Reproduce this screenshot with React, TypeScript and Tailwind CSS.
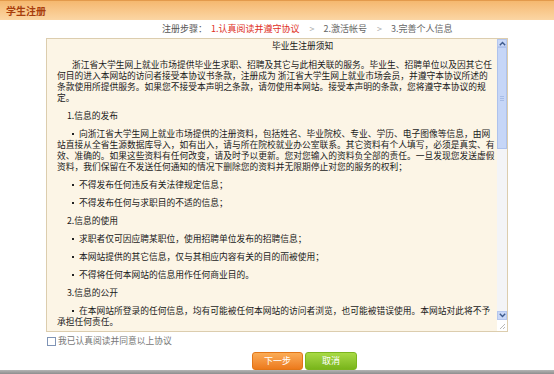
import React from "react";

type Block =
  | { kind: "head"; text: string }
  | { kind: "para"; lines: string[] }
  | { kind: "bullet"; lines: string[] };

const blocks: Block[] = [
  {
    kind: "para",
    lines: [
      "浙江省大学生网上就业市场提供毕业生求职、招聘及其它与此相关联的服务。毕业生、招聘单位以及因其它任",
      "何目的进入本网站的访问者接受本协议书条款，注册成为 浙江省大学生网上就业市场会员，并遵守本协议所述的",
      "条款使用所提供服务。如果您不接受本声明之条款，请勿使用本网站。接受本声明的条款，您将遵守本协议的规",
      "定。",
    ],
  },
  { kind: "head", text: "1.信息的发布" },
  {
    kind: "bullet",
    lines: [
      "向浙江省大学生网上就业市场提供的注册资料，包括姓名、毕业院校、专业、学历、电子图像等信息，由网",
      "站直接从全省生源数据库导入，如有出入，请与所在院校就业办公室联系。其它资料有个人填写，必须是真实、有",
      "效、准确的。如果这些资料有任何改变，请及时予以更新。您对您输入的资料负全部的责任。一旦发现您发送虚假",
      "资料，我们保留在不发送任何通知的情况下删除您的资料并无限期停止对您的服务的权利；",
    ],
  },
  { kind: "bullet", lines: ["不得发布任何违反有关法律规定信息；"] },
  { kind: "bullet", lines: ["不得发布任何与求职目的不适的信息；"] },
  { kind: "head", text: "2.信息的使用" },
  { kind: "bullet", lines: ["求职者仅可因应聘某职位，使用招聘单位发布的招聘信息；"] },
  { kind: "bullet", lines: ["本网站提供的其它信息，仅与其相应内容有关的目的而被使用；"] },
  { kind: "bullet", lines: ["不得将任何本网站的信息用作任何商业目的。"] },
  { kind: "head", text: "3.信息的公开" },
  {
    kind: "bullet",
    lines: [
      "在本网站所登录的任何信息，均有可能被任何本网站的访问者浏览，也可能被错误使用。本网站对此将不予",
      "承担任何责任。",
    ],
  },
];

function Dot() {
  return <span className="inline-block w-[2px] h-[2px] bg-[#222] align-middle mr-[5px] mb-[1px]" />;
}

function AgreementBlock({ block }: { block: Block }) {
  if (block.kind === "head") {
    return <div className="mb-[7px] pl-[10px]">{block.text}</div>;
  }
  return (
    <div className="mb-[7px]">
      {block.lines.map((line, i) => (
        <div key={i} className={i === 0 ? "pl-[15px]" : ""}>
          {i === 0 && block.kind === "bullet" && <Dot />}
          {line}
        </div>
      ))}
    </div>
  );
}

function Chevron({ up }: { up?: boolean }) {
  return (
    <svg width="7" height="5" viewBox="0 0 7 5" className={up ? "" : "rotate-180"}>
      <path d="M0.8 4.2 L3.5 1.4 L6.2 4.2" fill="none" stroke="#3d5a8c" strokeWidth="1.4" />
    </svg>
  );
}

function FakeScrollbar() {
  return (
    <div className="flex w-[10px] flex-col">
      <div className="flex h-[8px] items-center justify-center border border-[#b4c6ee] bg-[#c9d8f8]">
        <Chevron up />
      </div>
      <div className="flex h-[102px] flex-col items-center justify-center gap-[1px] border border-[#aec2ec] bg-[#c6d6f7]">
        <div className="h-px w-[4px] bg-[#a7bce6]" />
        <div className="h-px w-[4px] bg-[#a7bce6]" />
        <div className="h-px w-[4px] bg-[#a7bce6]" />
      </div>
      <div className="flex-1 bg-[#f3f4f7]" />
      <div className="flex h-[9px] items-center justify-center border border-[#b4c6ee] bg-[#c9d8f8]">
        <Chevron />
      </div>
      <div className="relative h-[11px] bg-white">
        <svg width="8" height="8" viewBox="0 0 8 8" className="absolute bottom-[1px] right-[1px]">
          <path d="M7 2 L2 7 M7 5 L5 7" stroke="#b8b8b8" strokeWidth="1" />
        </svg>
      </div>
    </div>
  );
}

export default function App() {
  return (
    <div className="flex h-[374px] w-[554px] flex-col bg-white font-['Noto_Sans_CJK_SC',sans-serif]">
      <div className="flex h-[20px] items-center border-t border-[#e39a4c] bg-gradient-to-b from-[#f5b86f] to-[#fbd6a4] pl-[6px]">
        <span className="text-[10px] font-bold text-[#a83d0c]">学生注册</span>
      </div>

      <div className="flex h-[19px] items-center pl-[162px] text-[9px] leading-none text-[#555]">
        <span>注册步骤：</span>
        <span className="ml-[4px] text-[#e0301e]">1.认真阅读并遵守协议</span>
        <span className="ml-[10px] text-[#aaa]">&gt;</span>
        <span className="ml-[9px] text-[#666]">2.激活帐号</span>
        <span className="ml-[10px] text-[#aaa]">&gt;</span>
        <span className="ml-[9px] text-[#666]">3.完善个人信息</span>
      </div>

      <div className="ml-[46px] flex h-[294px] w-[462px] border border-[#dccdae] bg-[#fcf5e6]">
        <div className="flex-1 overflow-hidden whitespace-nowrap pl-[10px] pt-[1px] text-[8.75px] leading-[11px] text-[#1a1a1a]">
          <div className="mb-[8px] pl-[215px]">毕业生注册须知</div>
          {blocks.map((b, i) => (
            <AgreementBlock key={i} block={b} />
          ))}
        </div>
        <FakeScrollbar />
      </div>

      <label className="ml-[47px] mt-[5px] flex items-center text-[8.75px] leading-none text-[#777]">
        <span className="mr-[2px] h-[9px] w-[9px] border border-[#7f94b6] bg-white" />
        我已认真阅读并同意以上协议
      </label>

      <div className="mt-[6px] flex gap-[2px] pl-[252px]">
        <button className="flex h-[18px] w-[51px] items-center justify-center rounded-[3px] border border-[#e27618] bg-gradient-to-b from-[#fbac55] to-[#ec7a1a] text-[9px] text-white">
          下一步
        </button>
        <button className="flex h-[18px] w-[52px] items-center justify-center rounded-[3px] border border-[#7cb51e] bg-gradient-to-b from-[#a8da44] to-[#79b51a] text-[9px] text-white">
          取消
        </button>
      </div>

      <div className="mt-auto h-[4px] bg-gradient-to-b from-[#b5b5b5] to-[#8e8e8e]" />
    </div>
  );
}
